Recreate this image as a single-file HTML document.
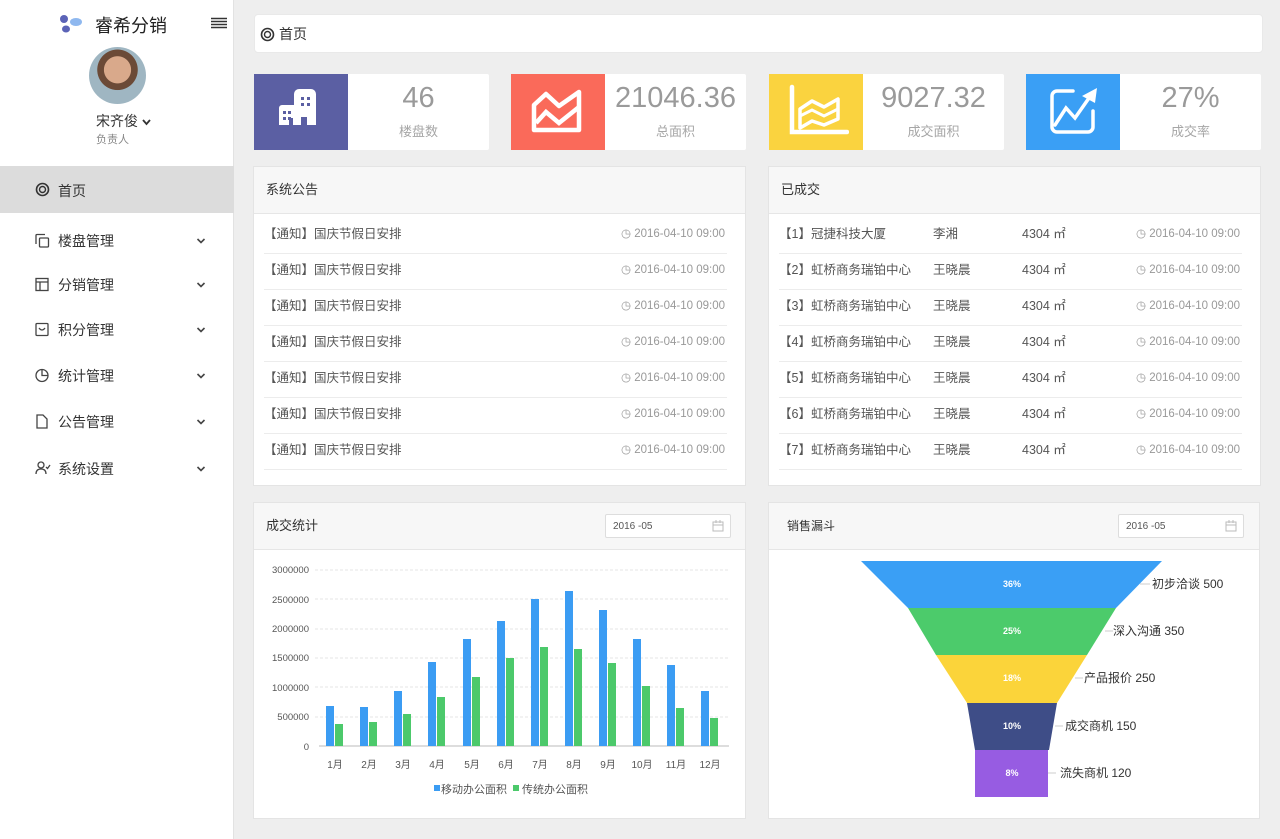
<!DOCTYPE html>
<html><head><meta charset="utf-8">
<style>
*{margin:0;padding:0;box-sizing:border-box}
body{width:1280px;height:839px;background:#eeeeee;font-family:"Liberation Sans","Noto Sans CJK SC",sans-serif;position:relative;overflow:hidden;color:#333}
.abs{position:absolute}
#side{left:0;top:0;width:234px;height:839px;background:#fff;border-right:1px solid #e2e2e2}
.menu{position:absolute;left:0;width:234px;height:46px;font-size:14px;color:#333}
.menu .ic{position:absolute;left:35px;top:15px}
.menu .t{position:absolute;left:58px;top:13px}
.menu .ch{position:absolute;left:196px;top:18px}
.card{position:absolute;top:74px;width:235px;height:76px;background:#fff;border-radius:2px}
.card .ib{position:absolute;left:0;top:0;width:94px;height:76px}
.card .n{position:absolute;left:94px;right:0;top:8px;text-align:center;font-size:29px;color:#9a9a9a}
.card .l{position:absolute;left:94px;right:0;top:47px;text-align:center;font-size:13px;color:#a6a6a6}
.panel{position:absolute;background:#fff;border:1px solid #e4e4e4}
.ph{position:absolute;left:0;right:0;top:0;height:47px;background:#f7f7f7;border-bottom:1px solid #e6e6e6;font-size:13px;color:#333;padding:15px 0 0 12px;line-height:16px}
.row{position:absolute;left:10px;right:18px;height:36px;border-bottom:1px solid #ececec;font-size:12.5px;color:#555}
.row span{position:absolute;top:8px;line-height:16px}
.row .d{right:2px;color:#999;font-size:11.5px}
.date{position:absolute;width:126px;height:24px;border:1px solid #ddd;border-radius:2px;background:#fff;font-size:10px;color:#555;padding:6px 0 0 7px;line-height:12px}
</style></head><body>
<div id="side" class="abs">
  <svg class="abs" style="left:59px;top:14px" width="24" height="20" viewBox="0 0 24 20"><circle cx="5" cy="5" r="4" fill="#5b63b7"/><ellipse cx="17" cy="8" rx="6" ry="4" fill="#8fb8ef"/><ellipse cx="7" cy="15" rx="4" ry="3.5" fill="#5b63b7"/></svg>
  <div class="abs" style="left:95px;top:12px;font-size:18px;color:#222">睿希分销</div>
  <svg class="abs" style="left:211px;top:17px" width="16" height="12"><path d="M0 1.5h16M0 4.5h16M0 7.5h16M0 10.5h16" stroke="#333" stroke-width="1.5"/></svg>
  <div class="abs" style="left:89px;top:47px;width:57px;height:57px;border-radius:50%;background:radial-gradient(circle at 50% 40%,#d9a98b 0 30%,#6b4a37 31% 45%,#9fb6c2 46%);overflow:hidden"></div>
  <div class="abs" style="left:96px;top:111px;font-size:14px;color:#333">宋齐俊 <svg width="9" height="7"><path d="M1 1l3.5 4L8 1" stroke="#333" stroke-width="1.8" fill="none"/></svg></div>
  <div class="abs" style="left:96px;top:131px;font-size:11px;color:#888">负责人</div>
  <div class="menu" style="top:166px;height:47px;background:#dcdcdc">
    <svg class="ic" style="top:16px" width="15" height="15"><circle cx="7.5" cy="7.5" r="6" stroke="#333" stroke-width="1.6" fill="none"/><circle cx="7.5" cy="7.5" r="3" stroke="#333" stroke-width="1.4" fill="none"/></svg>
    <span class="t" style="top:15px">首页</span></div>
  <div class="menu" style="top:218px"><svg class="ic" width="15" height="15"><path d="M1 11V2.5q0-1 1-1h8" stroke="#444" stroke-width="1.3" fill="none"/><rect x="4.5" y="5" width="9" height="9" rx="1" stroke="#444" stroke-width="1.3" fill="none"/></svg><span class="t">楼盘管理</span><svg class="ch" width="10" height="10"><path d="M1.5 3l3.5 3.5L8.5 3" stroke="#444" stroke-width="1.6" fill="none"/></svg></div>
  <div class="menu" style="top:262px"><svg class="ic" width="15" height="15"><rect x="1" y="1.5" width="12" height="12" stroke="#444" stroke-width="1.3" fill="none"/><path d="M1 5h12M5 5v8.5" stroke="#444" stroke-width="1.3"/></svg><span class="t">分销管理</span><svg class="ch" width="10" height="10"><path d="M1.5 3l3.5 3.5L8.5 3" stroke="#444" stroke-width="1.6" fill="none"/></svg></div>
  <div class="menu" style="top:307px"><svg class="ic" width="15" height="15"><rect x="1" y="1.5" width="12" height="12" rx="1" stroke="#444" stroke-width="1.3" fill="none"/><path d="M4 6q3 4 6 0" stroke="#444" stroke-width="1.3" fill="none"/></svg><span class="t">积分管理</span><svg class="ch" width="10" height="10"><path d="M1.5 3l3.5 3.5L8.5 3" stroke="#444" stroke-width="1.6" fill="none"/></svg></div>
  <div class="menu" style="top:353px"><svg class="ic" width="15" height="15"><circle cx="7" cy="7.5" r="6" stroke="#444" stroke-width="1.3" fill="none"/><path d="M7 1.5v6h6" stroke="#444" stroke-width="1.3" fill="none"/></svg><span class="t">统计管理</span><svg class="ch" width="10" height="10"><path d="M1.5 3l3.5 3.5L8.5 3" stroke="#444" stroke-width="1.6" fill="none"/></svg></div>
  <div class="menu" style="top:399px"><svg class="ic" width="15" height="15"><path d="M2 1h6l4 4v9H2z" stroke="#444" stroke-width="1.3" fill="none"/></svg><span class="t">公告管理</span><svg class="ch" width="10" height="10"><path d="M1.5 3l3.5 3.5L8.5 3" stroke="#444" stroke-width="1.6" fill="none"/></svg></div>
  <div class="menu" style="top:446px"><svg class="ic" width="16" height="15"><circle cx="6" cy="4" r="3" stroke="#444" stroke-width="1.3" fill="none"/><path d="M1 13q0-5 5-5t5 5M11 6l1.5 1.5L15 4" stroke="#444" stroke-width="1.3" fill="none"/></svg><span class="t">系统设置</span><svg class="ch" width="10" height="10"><path d="M1.5 3l3.5 3.5L8.5 3" stroke="#444" stroke-width="1.6" fill="none"/></svg></div>
</div>

<div class="abs" style="left:254px;top:14px;width:1009px;height:39px;background:#fff;border-radius:4px;border:1px solid #e9e9e9">
  <svg class="abs" style="left:5px;top:12px" width="15" height="15"><circle cx="7.5" cy="7.5" r="6" stroke="#333" stroke-width="1.6" fill="none"/><circle cx="7.5" cy="7.5" r="3" stroke="#333" stroke-width="1.4" fill="none"/></svg>
  <span class="abs" style="left:24px;top:10px;font-size:14px;line-height:18px">首页</span>
</div>

<div class="card" style="left:254px"><div class="ib" style="background:#5b5fa3">
<svg class="abs" style="left:22px;top:14px" width="50" height="50"><path d="M3 37V20a3 3 0 0 1 3-3h12V6a5 5 0 0 1 5-5h12a5 5 0 0 1 5 5v31H31v-8h-6v8H17v-7h-4v7z" fill="#fff"/><g fill="#5b5fa3"><rect x="25" y="9" width="3" height="3"/><rect x="31" y="9" width="3" height="3"/><rect x="25" y="15" width="3" height="3"/><rect x="31" y="15" width="3" height="3"/><rect x="7" y="23" width="3" height="3"/><rect x="12" y="23" width="3" height="3"/><rect x="7" y="29" width="3" height="3"/><rect x="12" y="29" width="3" height="3"/></g></svg></div>
<div class="n">46</div><div class="l">楼盘数</div></div>
<div class="card" style="left:511px"><div class="ib" style="background:#fa6a5a">
<svg class="abs" style="left:18px;top:12px" width="58" height="52"><path d="M5 44V19L17 8l13 12 20-14v38z" stroke="#fff" stroke-width="4.5" fill="none" stroke-linejoin="round"/><path d="M7 37L17 26l13 11 20-16" stroke="#fff" stroke-width="4.5" fill="none"/></svg></div>
<div class="n">21046.36</div><div class="l">总面积</div></div>
<div class="card" style="left:769px"><div class="ib" style="background:#fad33f">
<svg class="abs" style="left:18px;top:10px" width="62" height="56"><path d="M5 3v45h55" stroke="#fff" stroke-width="4.5" fill="none" stroke-linecap="round"/><path d="M13 25l12-8 12 6 14-8v20l-14 6-12-4-12 7z" stroke="#fff" stroke-width="3.5" fill="none" stroke-linejoin="round"/><path d="M13 32l12-6 12 6 14-7" stroke="#fff" stroke-width="3" fill="none"/></svg></div>
<div class="n">9027.32</div><div class="l">成交面积</div></div>
<div class="card" style="left:1026px"><div class="ib" style="background:#3a9ff5">
<svg class="abs" style="left:20px;top:10px" width="56" height="56"><path d="M27 7H11a5 5 0 0 0-5 5v31a5 5 0 0 0 5 5h31a5 5 0 0 0 5-5V27" stroke="#fff" stroke-width="3.5" fill="none" stroke-linecap="round"/><path d="M9 41l11-17 9 10 14-20" stroke="#fff" stroke-width="3.5" fill="none" stroke-linecap="round"/><path d="M36 12l15-8-2 15z" fill="#fff"/></svg></div>
<div class="n">27%</div><div class="l">成交率</div></div>

<div class="panel" style="left:253px;top:166px;width:493px;height:320px">
<div class="ph">系统公告</div>
<div class="row" style="top:51px"><span>【通知】国庆节假日安排</span><span class="d">◷ 2016-04-10 09:00</span></div>
<div class="row" style="top:87px"><span>【通知】国庆节假日安排</span><span class="d">◷ 2016-04-10 09:00</span></div>
<div class="row" style="top:123px"><span>【通知】国庆节假日安排</span><span class="d">◷ 2016-04-10 09:00</span></div>
<div class="row" style="top:159px"><span>【通知】国庆节假日安排</span><span class="d">◷ 2016-04-10 09:00</span></div>
<div class="row" style="top:195px"><span>【通知】国庆节假日安排</span><span class="d">◷ 2016-04-10 09:00</span></div>
<div class="row" style="top:231px"><span>【通知】国庆节假日安排</span><span class="d">◷ 2016-04-10 09:00</span></div>
<div class="row" style="top:267px"><span>【通知】国庆节假日安排</span><span class="d">◷ 2016-04-10 09:00</span></div>
</div>

<div class="panel" style="left:768px;top:166px;width:493px;height:320px">
<div class="ph">已成交</div>
<div class="row" style="top:51px"><span>【1】冠捷科技大厦</span><span style="left:154px">李湘</span><span style="left:243px">4304 ㎡</span><span class="d">◷ 2016-04-10 09:00</span></div>
<div class="row" style="top:87px"><span>【2】虹桥商务瑞铂中心</span><span style="left:154px">王晓晨</span><span style="left:243px">4304 ㎡</span><span class="d">◷ 2016-04-10 09:00</span></div>
<div class="row" style="top:123px"><span>【3】虹桥商务瑞铂中心</span><span style="left:154px">王晓晨</span><span style="left:243px">4304 ㎡</span><span class="d">◷ 2016-04-10 09:00</span></div>
<div class="row" style="top:159px"><span>【4】虹桥商务瑞铂中心</span><span style="left:154px">王晓晨</span><span style="left:243px">4304 ㎡</span><span class="d">◷ 2016-04-10 09:00</span></div>
<div class="row" style="top:195px"><span>【5】虹桥商务瑞铂中心</span><span style="left:154px">王晓晨</span><span style="left:243px">4304 ㎡</span><span class="d">◷ 2016-04-10 09:00</span></div>
<div class="row" style="top:231px"><span>【6】虹桥商务瑞铂中心</span><span style="left:154px">王晓晨</span><span style="left:243px">4304 ㎡</span><span class="d">◷ 2016-04-10 09:00</span></div>
<div class="row" style="top:267px"><span>【7】虹桥商务瑞铂中心</span><span style="left:154px">王晓晨</span><span style="left:243px">4304 ㎡</span><span class="d">◷ 2016-04-10 09:00</span></div>
</div>

<div class="panel" style="left:253px;top:502px;width:493px;height:317px">
<div class="ph">成交统计</div>
<div class="date" style="left:351px;top:11px">2016 -05<svg class="abs" style="right:6px;top:5px" width="12" height="12"><rect x="1" y="2" width="10" height="9" stroke="#bbb" fill="none"/><path d="M1 5h10M4 0v3M8 0v3" stroke="#bbb"/></svg></div>
</div>
<svg class="abs" style="left:253px;top:502px" width="493" height="317" font-family="Liberation Sans,Noto Sans CJK SC,sans-serif">
<g stroke="#e6e6e6" stroke-dasharray="3,2"><path d="M62 68H476M62 97H476M62 127H476M62 156H476M62 185H476M62 215H476"/></g>
<path d="M66 244H476" stroke="#bbb"/>
<g font-size="9.5" fill="#555" text-anchor="end"><text x="56" y="71">3000000</text><text x="56" y="101">2500000</text><text x="56" y="130">2000000</text><text x="56" y="159">1500000</text><text x="56" y="189">1000000</text><text x="56" y="218">500000</text><text x="56" y="248">0</text></g>
<g fill="#3b9cf3"><rect x="73" y="204" width="8" height="40"/><rect x="107" y="205" width="8" height="39"/><rect x="141" y="189" width="8" height="55"/><rect x="175" y="160" width="8" height="84"/><rect x="210" y="137" width="8" height="107"/><rect x="244" y="119" width="8" height="125"/><rect x="278" y="97" width="8" height="147"/><rect x="312" y="89" width="8" height="155"/><rect x="346" y="108" width="8" height="136"/><rect x="380" y="137" width="8" height="107"/><rect x="414" y="163" width="8" height="81"/><rect x="448" y="189" width="8" height="55"/></g>
<g fill="#4cc96b"><rect x="82" y="222" width="8" height="22"/><rect x="116" y="220" width="8" height="24"/><rect x="150" y="212" width="8" height="32"/><rect x="184" y="195" width="8" height="49"/><rect x="219" y="175" width="8" height="69"/><rect x="253" y="156" width="8" height="88"/><rect x="287" y="145" width="8" height="99"/><rect x="321" y="147" width="8" height="97"/><rect x="355" y="161" width="8" height="83"/><rect x="389" y="184" width="8" height="60"/><rect x="423" y="206" width="8" height="38"/><rect x="457" y="216" width="8" height="28"/></g>
<g font-size="10" fill="#555" text-anchor="middle"><text x="82" y="266">1月</text><text x="116" y="266">2月</text><text x="150" y="266">3月</text><text x="184" y="266">4月</text><text x="219" y="266">5月</text><text x="253" y="266">6月</text><text x="287" y="266">7月</text><text x="321" y="266">8月</text><text x="355" y="266">9月</text><text x="389" y="266">10月</text><text x="423" y="266">11月</text><text x="457" y="266">12月</text></g>
<rect x="181" y="283" width="6" height="6" fill="#3b9cf3"/><text x="188" y="291" font-size="11" fill="#555">移动办公面积</text>
<rect x="260" y="283" width="6" height="6" fill="#4cc96b"/><text x="269" y="291" font-size="11" fill="#555">传统办公面积</text>
</svg>

<div class="panel" style="left:768px;top:502px;width:492px;height:317px">
<div class="ph" style="padding-left:18px;font-size:12px">销售漏斗</div>
<div class="date" style="left:349px;top:11px">2016 -05<svg class="abs" style="right:6px;top:5px" width="12" height="12"><rect x="1" y="2" width="10" height="9" stroke="#bbb" fill="none"/><path d="M1 5h10M4 0v3M8 0v3" stroke="#bbb"/></svg></div>
</div>
<svg class="abs" style="left:850px;top:550px" width="410" height="260" font-family="Liberation Sans,Noto Sans CJK SC,sans-serif">
<path d="M11 11H312L266 58H58z" fill="#3a9ff5"/>
<path d="M58 58H266L237 105H86z" fill="#4ccb6b"/>
<path d="M86 105H237L207 153H117z" fill="#fbd43a"/>
<path d="M117 153H207L199 200H125z" fill="#3e4d87"/>
<rect x="125" y="200" width="73" height="47" fill="#975ce2"/>
<g font-size="9" font-weight="bold" fill="#fff" text-anchor="middle"><text x="162" y="37">36%</text><text x="162" y="84">25%</text><text x="162" y="131">18%</text><text x="162" y="179">10%</text><text x="162" y="226">8%</text></g>
<g stroke="#ccc"><path d="M290 34h10M255 81h8M225 128h8M205 176h8M198 223h8"/></g>
<g font-size="12" fill="#333"><text x="302" y="38">初步洽谈 500</text><text x="263" y="85">深入沟通 350</text><text x="234" y="132">产品报价 250</text><text x="215" y="180">成交商机 150</text><text x="210" y="227">流失商机 120</text></g>
</svg>
</body></html>
